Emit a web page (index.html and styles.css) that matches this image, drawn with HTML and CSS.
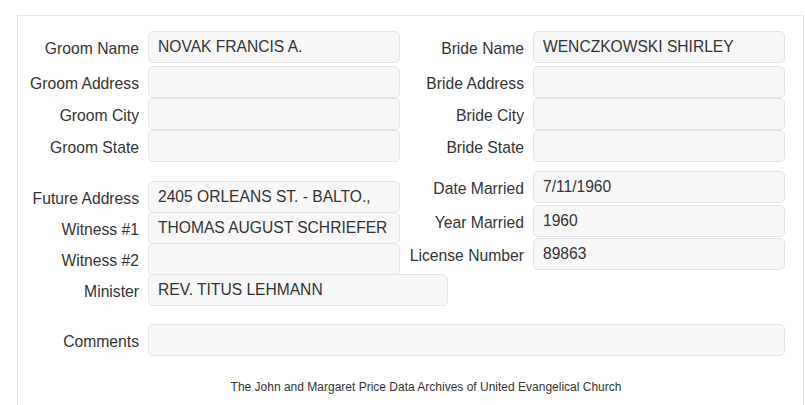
FILE: index.html
```html
<!DOCTYPE html>
<html lang="en">
<head>
  <meta charset="UTF-8" />
  <title>Marriage Record</title>
  <link rel="stylesheet" href="styles.css">
</head>
<body>
  <div class="panel">
    <div class="section top">
      <div class="col">
        <div class="field first"><span class="label">Groom Name</span><div class="input">NOVAK FRANCIS A.</div></div>
        <div class="field"><span class="label">Groom Address</span><div class="input"></div></div>
        <div class="field"><span class="label">Groom City</span><div class="input"></div></div>
        <div class="field"><span class="label">Groom State</span><div class="input"></div></div>
      </div>
      <div class="col">
        <div class="field first"><span class="label">Bride Name</span><div class="input">WENCZKOWSKI SHIRLEY</div></div>
        <div class="field"><span class="label">Bride Address</span><div class="input"></div></div>
        <div class="field"><span class="label">Bride City</span><div class="input"></div></div>
        <div class="field"><span class="label">Bride State</span><div class="input"></div></div>
      </div>
    </div>

    <div class="section mid">
      <div class="col people">
        <div class="field"><span class="label">Future Address</span><div class="input">2405 ORLEANS ST. - BALTO.,</div></div>
        <div class="field"><span class="label">Witness #1</span><div class="input">THOMAS AUGUST SCHRIEFER</div></div>
        <div class="field"><span class="label">Witness #2</span><div class="input"></div></div>
        <div class="field"><span class="label">Minister</span><div class="input wide">REV. TITUS LEHMANN</div></div>
      </div>
      <div class="col dates">
        <div class="field first"><span class="label">Date Married</span><div class="input">7/11/1960</div></div>
        <div class="field"><span class="label">Year Married</span><div class="input">1960</div></div>
        <div class="field"><span class="label">License Number</span><div class="input">89863</div></div>
      </div>
    </div>

    <div class="field comments"><span class="label">Comments</span><div class="input full"></div></div>

    <p class="footer">The John and Margaret Price Data Archives of United Evangelical Church</p>
  </div>
</body>
</html>
```

FILE: styles.css
```css
:root {
  --text: #333;
  --border: #e6e6e6;
  --field-bg: #f7f7f7;
  --field-border: #e3e3e3;
}

* { margin: 0; padding: 0; box-sizing: border-box; }

html, body {
  background: #fff;
  font-family: "Liberation Sans", Arial, sans-serif;
  color: var(--text);
  overflow: hidden;
}

.panel {
  margin: 15px 0 0 17px;
  width: 787px;
  border: 1px solid var(--border);
  padding: 15px 0 30px 0;
}

.section {
  display: grid;
  grid-template-columns: 382px 382px;
  column-gap: 3px;
}

.col {
  display: flex;
  flex-direction: column;
}

.field {
  display: grid;
  grid-template-columns: 121px auto;
  column-gap: 9px;
  align-items: center;
}

.label {
  font-size: 15.7px;
  text-align: right;
  white-space: nowrap;
  padding-top: 3px;
}

.input {
  width: 252px;
  height: 32px;
  padding: 0 9px;
  display: flex;
  align-items: center;
  font-size: 15.6px;
  white-space: nowrap;
  background: var(--field-bg);
  border: 1px solid var(--field-border);
  border-radius: 5px;
}

.input.wide { width: 300px; }
.input.full { width: 637px; }

.top .first { margin-bottom: 3px; }

.mid { margin-top: 9px; }
.people { padding-top: 10px; }
.people .field + .field { margin-top: -1px; }
.dates .first { margin-bottom: 2px; }
.dates .field + .field + .field { margin-top: 1px; }

.comments { margin-top: 18px; }

.footer {
  margin-top: 24px;
  font-size: 12px;
  text-align: center;
  padding-left: 31px;
}
```
